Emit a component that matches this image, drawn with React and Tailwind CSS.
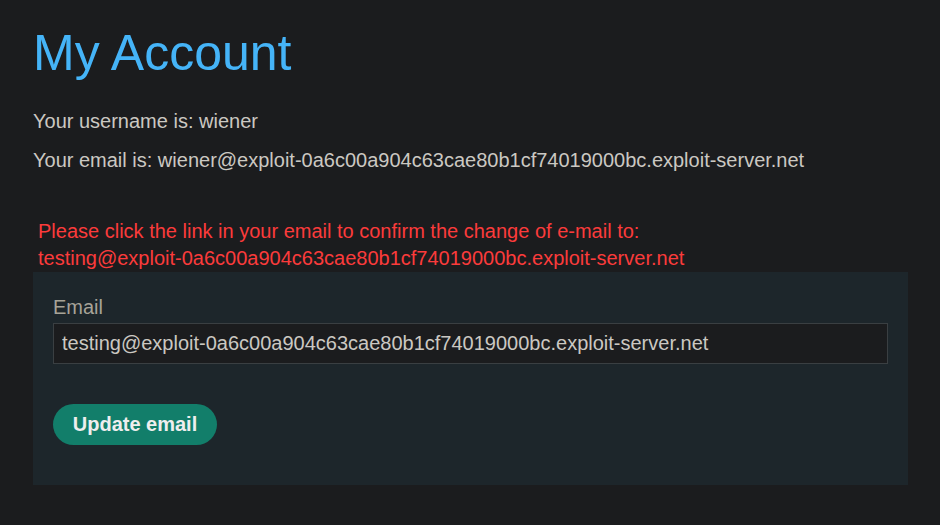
export default function App() {
  return (
    <div className="min-h-screen bg-[#1b1c1e] px-[33px] pr-[32px] pt-[25px] font-['Liberation_Sans',Arial,sans-serif] text-[20px] leading-[23px] text-[#cbc8c2]">
      <h1 className="text-[50px] leading-[57px] text-[#45b4f8]">My Account</h1>
      <p className="mt-[28px]">Your username is: wiener</p>
      <p className="mt-[16px]">Your email is: wiener@exploit-0a6c00a904c63cae80b1cf74019000bc.exploit-server.net</p>
      <p className="mt-[46px] pl-[5px] leading-[27px] text-[#fb3b3b]">
        Please click the link in your email to confirm the change of e-mail to:
        <br />
        testing@exploit-0a6c00a904c63cae80b1cf74019000bc.exploit-server.net
      </p>
      <form
        className="flex flex-col bg-[#1d262b] px-[20px] pt-[24px] pb-[40px]"
        onSubmit={(e) => e.preventDefault()}
      >
        <label className="text-[#a7a398]">Email</label>
        <input
          className="mt-[4px] h-[41px] border border-[#3a3f42] bg-[#1b1c1e] px-[8px] text-[20px] text-[#cbc8c2] outline-none"
          defaultValue="testing@exploit-0a6c00a904c63cae80b1cf74019000bc.exploit-server.net"
        />
        <button
          type="submit"
          className="mt-[40px] h-[41px] w-[164px] rounded-full bg-[#127e6a] text-[20px] font-bold text-[#eeeeee]"
        >
          Update email
        </button>
      </form>
    </div>
  )
}
